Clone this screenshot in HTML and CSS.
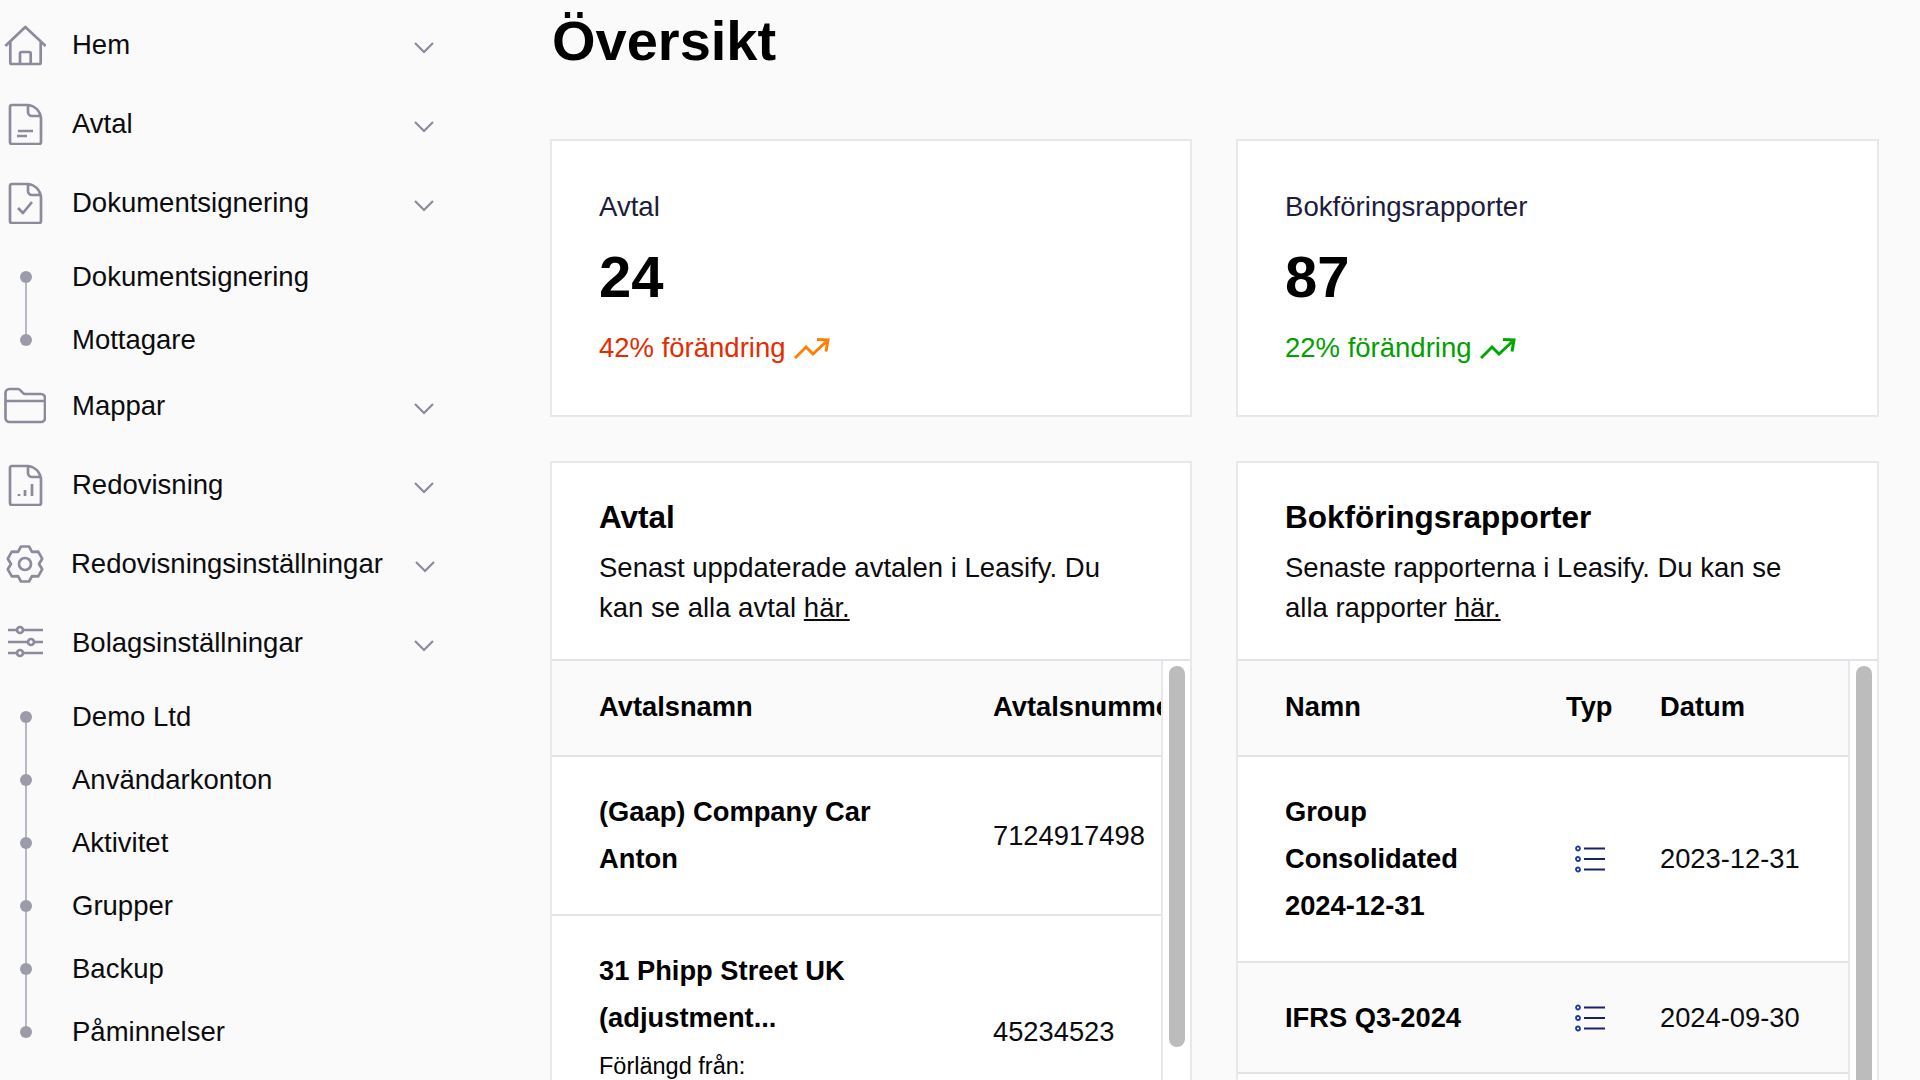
FILE: index.html
```html
<!DOCTYPE html>
<html lang="sv">
<head>
  <meta charset="UTF-8">
  <title>Översikt</title>
  <link rel="stylesheet" href="styles.css">
</head>
<body>

  <div class="layout">

    <nav class="sidebar">
      <div class="nav-row">
        <svg class="nav-icon" viewBox="0 0 42 42"><path d="M1.300 22 21.300 3l20.400 19M6.300 17.500V38.500a1.500 1.500 0 0 0 1.500 1.500h27.400a1.500 1.500 0 0 0 1.500-1.500V17.500M16 40V29.500a1.500 1.500 0 0 1 1.500-1.500h7.700a1.500 1.500 0 0 1 1.500 1.500V40"/></svg>
        <span class="nav-label">Hem</span>
        <svg class="chevron" viewBox="0 0 20 12"><path d="M1 1l9 9 9-9"/></svg>
      </div>
      <div class="nav-row">
        <svg class="nav-icon" viewBox="0 0 42 42"><path d="M8 2h16c7 1 12 6 13 13v24a2 2 0 0 1-2 2H8a2 2 0 0 1-2-2V4a2 2 0 0 1 2-2zM24 2v7a4 4 0 0 0 4 4h9M14 28h15M13 33h10"/></svg>
        <span class="nav-label">Avtal</span>
        <svg class="chevron" viewBox="0 0 20 12"><path d="M1 1l9 9 9-9"/></svg>
      </div>
      <div class="nav-row">
        <svg class="nav-icon" viewBox="0 0 42 42"><path d="M8 2h16c7 1 12 6 13 13v24a2 2 0 0 1-2 2H8a2 2 0 0 1-2-2V4a2 2 0 0 1 2-2zM24 2v7a4 4 0 0 0 4 4h9M14 26l5 5 9-11"/></svg>
        <span class="nav-label">Dokumentsignering</span>
        <svg class="chevron" viewBox="0 0 20 12"><path d="M1 1l9 9 9-9"/></svg>
      </div>
      <ul class="sub-list">
        <li class="sub-row"><span class="sub-marker"><i class="dot"></i></span>Dokumentsignering</li>
        <li class="sub-row"><span class="sub-marker"><i class="dot"></i></span>Mottagare</li>
      </ul>
      <div class="nav-row">
        <svg class="nav-icon" viewBox="0 0 42 42"><path d="M1.500 8a4 4 0 0 1 4-4h8.500c3 0 4 5 7 5h16a4 4 0 0 1 4 4v20a4 4 0 0 1-4 4H5.500a4 4 0 0 1-4-4zM1.500 16h40"/></svg>
        <span class="nav-label">Mappar</span>
        <svg class="chevron" viewBox="0 0 20 12"><path d="M1 1l9 9 9-9"/></svg>
      </div>
      <div class="nav-row">
        <svg class="nav-icon" viewBox="0 0 42 42"><path d="M8 2h16c7 1 12 6 13 13v24a2 2 0 0 1-2 2H8a2 2 0 0 1-2-2V4a2 2 0 0 1 2-2zM24 2v7a4 4 0 0 0 4 4h9M15 30v2M21 26v6M28 20v12"/></svg>
        <span class="nav-label">Redovisning</span>
        <svg class="chevron" viewBox="0 0 20 12"><path d="M1 1l9 9 9-9"/></svg>
      </div>
      <div class="nav-row nav-row-long">
        <svg class="nav-icon" viewBox="0 0 42 42"><path d="M14 8.900 17 3.500h8l3 5.400 6.200-.2 4 7-3.200 5.300 3.200 5.300-4 7-6.200-.2-3 5.400h-8l-3-5.400-6.200.2-4-7L7 21 3.800 15.700l4-7z"/><circle cx="21" cy="21" r="6"/></svg>
        <span class="nav-label">Redovisningsinställningar</span>
        <svg class="chevron" viewBox="0 0 20 12"><path d="M1 1l9 9 9-9"/></svg>
      </div>
      <div class="nav-row">
        <svg class="nav-icon" viewBox="0 0 42 42"><path d="M4 8h9M19 8h20M4 20h20M30 20h9M4 31h9M19 31h20"/><circle cx="16" cy="8" r="3"/><circle cx="27" cy="20" r="3"/><circle cx="16" cy="31" r="3"/></svg>
        <span class="nav-label">Bolagsinställningar</span>
        <svg class="chevron" viewBox="0 0 20 12"><path d="M1 1l9 9 9-9"/></svg>
      </div>
      <ul class="sub-list">
        <li class="sub-row"><span class="sub-marker"><i class="dot"></i></span>Demo Ltd</li>
        <li class="sub-row"><span class="sub-marker"><i class="dot"></i></span>Användarkonton</li>
        <li class="sub-row"><span class="sub-marker"><i class="dot"></i></span>Aktivitet</li>
        <li class="sub-row"><span class="sub-marker"><i class="dot"></i></span>Grupper</li>
        <li class="sub-row"><span class="sub-marker"><i class="dot"></i></span>Backup</li>
        <li class="sub-row"><span class="sub-marker"><i class="dot"></i></span>Påminnelser</li>
      </ul>
    </nav>

    <main class="content">
      <h1>Översikt</h1>

      <div class="card-grid">
        <section class="card stat-card">
          <div class="stat-label">Avtal</div>
          <div class="stat-value">24</div>
          <div class="stat-change stat-down">42% förändring
            <svg class="trend" viewBox="0 0 36 24"><path d="M1 21 12 10l7 7L34 3M23 2.500 34 3l-2 11.500"/></svg>
          </div>
        </section>

        <section class="card stat-card">
          <div class="stat-label">Bokföringsrapporter</div>
          <div class="stat-value">87</div>
          <div class="stat-change stat-up">22% förändring
            <svg class="trend" viewBox="0 0 36 24"><path d="M1 21 12 10l7 7L34 3M23 2.500 34 3l-2 11.500"/></svg>
          </div>
        </section>

        <section class="card list-card">
          <div class="list-head">
            <h2>Avtal</h2>
            <p>Senast uppdaterade avtalen i Leasify. Du kan se alla avtal <a href="#">här.</a></p>
          </div>
          <div class="list-body">
            <div class="table-clip">
              <table class="contracts">
                <thead>
                  <tr><th>Avtalsnamn</th><th>Avtalsnummer</th></tr>
                </thead>
                <tbody>
                  <tr>
                    <td class="name">(Gaap) Company Car Anton</td>
                    <td>7124917498</td>
                  </tr>
                  <tr>
                    <td class="name">31 Phipp Street UK (adjustment...
                      <div class="name-note">Förlängd från:</div>
                    </td>
                    <td>45234523</td>
                  </tr>
                </tbody>
              </table>
            </div>
            <div class="scroll-track"><div class="scroll-thumb thumb-short"></div></div>
          </div>
        </section>

        <section class="card list-card">
          <div class="list-head">
            <h2>Bokföringsrapporter</h2>
            <p>Senaste rapporterna i Leasify. Du kan se alla rapporter <a href="#">här.</a></p>
          </div>
          <div class="list-body">
            <div class="table-clip">
              <table class="reports">
                <thead>
                  <tr><th>Namn</th><th>Typ</th><th>Datum</th></tr>
                </thead>
                <tbody>
                  <tr>
                    <td class="name">Group Consolidated 2024-12-31</td>
                    <td><svg class="type-icon" viewBox="0 0 32 28"><circle cx="4" cy="3.500" r="2"/><circle cx="4" cy="14" r="2"/><circle cx="4" cy="24.500" r="2"/><path d="M10 3.500h21M10 14h21M10 24.500h21"/></svg></td>
                    <td>2023-12-31</td>
                  </tr>
                  <tr class="row-alt">
                    <td class="name">IFRS Q3-2024</td>
                    <td><svg class="type-icon" viewBox="0 0 32 28"><circle cx="4" cy="3.500" r="2"/><circle cx="4" cy="14" r="2"/><circle cx="4" cy="24.500" r="2"/><path d="M10 3.500h21M10 14h21M10 24.500h21"/></svg></td>
                    <td>2024-09-30</td>
                  </tr>
                </tbody>
              </table>
            </div>
            <div class="scroll-track"><div class="scroll-thumb thumb-long"></div></div>
          </div>
        </section>
      </div>
    </main>

  </div>

</body>
</html>
```

FILE: styles.css
```css
body {
  margin: 0;
  height: 1080px;
  overflow: hidden;
  background-color: #fafafa;
  color: #0c0c0f;
  font-family: "Liberation Sans", Arial, sans-serif;
}
.layout {
  display: flex;
  height: 1080px;
  overflow: hidden;
}

/* Sidebar */
.sidebar {
  flex: none;
  width: 550px;
  padding-top: 5px;
  font-size: 27.5px;
}
.nav-row {
  display: flex;
  align-items: center;
  height: 79px;
  padding-left: 4px;
}
.nav-icon {
  flex: none;
  width: 42px;
  height: 42px;
  margin-right: 26px;
}
.nav-icon path,
.nav-icon circle {
  fill: none;
  stroke: #8c8b9b;
  stroke-width: 2.7;
  stroke-linejoin: round;
}
.nav-label {
  width: 342px;
}
.nav-row-long .nav-label {
  width: 344px;
  margin-left: -1px;
}
.chevron {
  width: 20px;
  height: 12px;
  margin-top: 6px;
}
.chevron path {
  fill: none;
  stroke: #8c8b9b;
  stroke-width: 2.2;
}
.sub-list {
  list-style: none;
  margin: 3px 0 -5px;
  padding: 0;
}
.sub-row {
  display: flex;
  align-items: center;
  height: 63px;
}
.sub-marker {
  display: flex;
  align-items: center;
  justify-content: center;
  width: 51px;
  height: 100%;
  margin-right: 21px;
  background: linear-gradient(#b8b7c4, #b8b7c4) center / 2px 100% no-repeat;
}
.sub-row:first-child .sub-marker {
  background-size: 2px 50%;
  background-position: center bottom;
}
.sub-row:last-child .sub-marker {
  background-size: 2px 50%;
  background-position: center top;
}
.dot {
  width: 12px;
  height: 12px;
  border-radius: 50%;
  background-color: #9c9ba9;
}

/* Main column */
.content {
  flex: 1;
  padding-right: 41px;
}
h1 {
  height: 139px;
  margin: 0;
  padding-left: 2px;
  box-sizing: border-box;
  font-size: 56px;
  line-height: 82px;
  font-weight: bold;
  color: #000;
}
.card-grid {
  display: grid;
  grid-template-columns: 642px 643px;
  column-gap: 44px;
  row-gap: 44px;
}
.card {
  background-color: white;
  border: 2px solid #e8e8ea;
  box-sizing: border-box;
}

/* Stat cards */
.stat-card {
  height: 278px;
  padding: 47px;
}
.stat-label {
  font-size: 27.6px;
  line-height: 38px;
  color: #1c1c3c;
}
.stat-value {
  margin-top: 16px;
  font-size: 58px;
  line-height: 70px;
  font-weight: bold;
  color: #000;
}
.stat-change {
  display: flex;
  align-items: center;
  margin-top: 17px;
  font-size: 27.5px;
  line-height: 38px;
}
.trend {
  width: 36px;
  height: 24px;
  margin: 1px 0 0 8px;
}
.trend path {
  fill: none;
  stroke-width: 3;
}
.stat-down {
  color: #e62b00;
}
.stat-down .trend path {
  stroke: #ff7f00;
}
.stat-up {
  color: #00a000;
}
.stat-up .trend path {
  stroke: #00a800;
}

/* List cards */
.list-card {
  height: 640px;
  overflow: hidden;
}
.list-head {
  padding: 35px 47px 31px;
  border-bottom: 2px solid #e2e2e8;
}
.list-head h2 {
  margin: 0 0 12px;
  font-size: 31.5px;
  line-height: 38px;
  color: #000;
}
.list-head p {
  margin: 0;
  padding-right: 20px;
  font-size: 27.5px;
  line-height: 40px;
}
.list-head a {
  color: inherit;
}
.list-body {
  display: flex;
  height: 440px;
}
.table-clip {
  flex: 1;
  min-width: 0;
  overflow: hidden;
}
.scroll-track {
  flex: none;
  width: 29px;
  border-left: 2px solid #e8e8ea;
  box-sizing: border-box;
}
.scroll-thumb {
  width: 16px;
  margin: 5px 0 0 6px;
  border-radius: 8px;
  background-color: #bcbcbc;
}
.thumb-short {
  height: 381px;
}
.thumb-long {
  height: 435px;
}

/* Tables */
table {
  border-collapse: separate;
  border-spacing: 0;
  table-layout: fixed;
  font-size: 27.3px;
  line-height: 47px;
}
th {
  padding: 22px 0 25px;
  text-align: left;
  white-space: nowrap;
  background-color: #fafafa;
  border-bottom: 2px solid #e2e2e8;
  color: #000;
}
td {
  padding: 31px 0 32px;
  border-bottom: 2px solid #e2e2e8;
}
th:first-child,
td:first-child {
  padding-left: 47px;
}
.name {
  font-weight: bold;
  color: #000;
}
.name-note {
  min-height: 68px;
  margin-top: 7px;
  font-size: 23.5px;
  line-height: 37px;
  font-weight: normal;
}
.contracts {
  width: 760px;
}
.contracts th:first-child,
.contracts td:first-child {
  width: 300px;
  padding-right: 94px;
}
.reports {
  width: 612px;
}
.reports th:first-child,
.reports td:first-child {
  width: 234px;
  padding-right: 47px;
}
.reports th:nth-child(2),
.reports td:nth-child(2) {
  width: 94px;
}
.row-alt td {
  padding-bottom: 31px;
  background-color: #fafafa;
}
.type-icon {
  display: block;
  width: 32px;
  height: 28px;
  margin-left: 8px;
}
.type-icon circle {
  fill: none;
  stroke: #1f3c9a;
  stroke-width: 1.8;
}
.type-icon path {
  stroke: #1a2266;
  stroke-width: 2;
}
```
